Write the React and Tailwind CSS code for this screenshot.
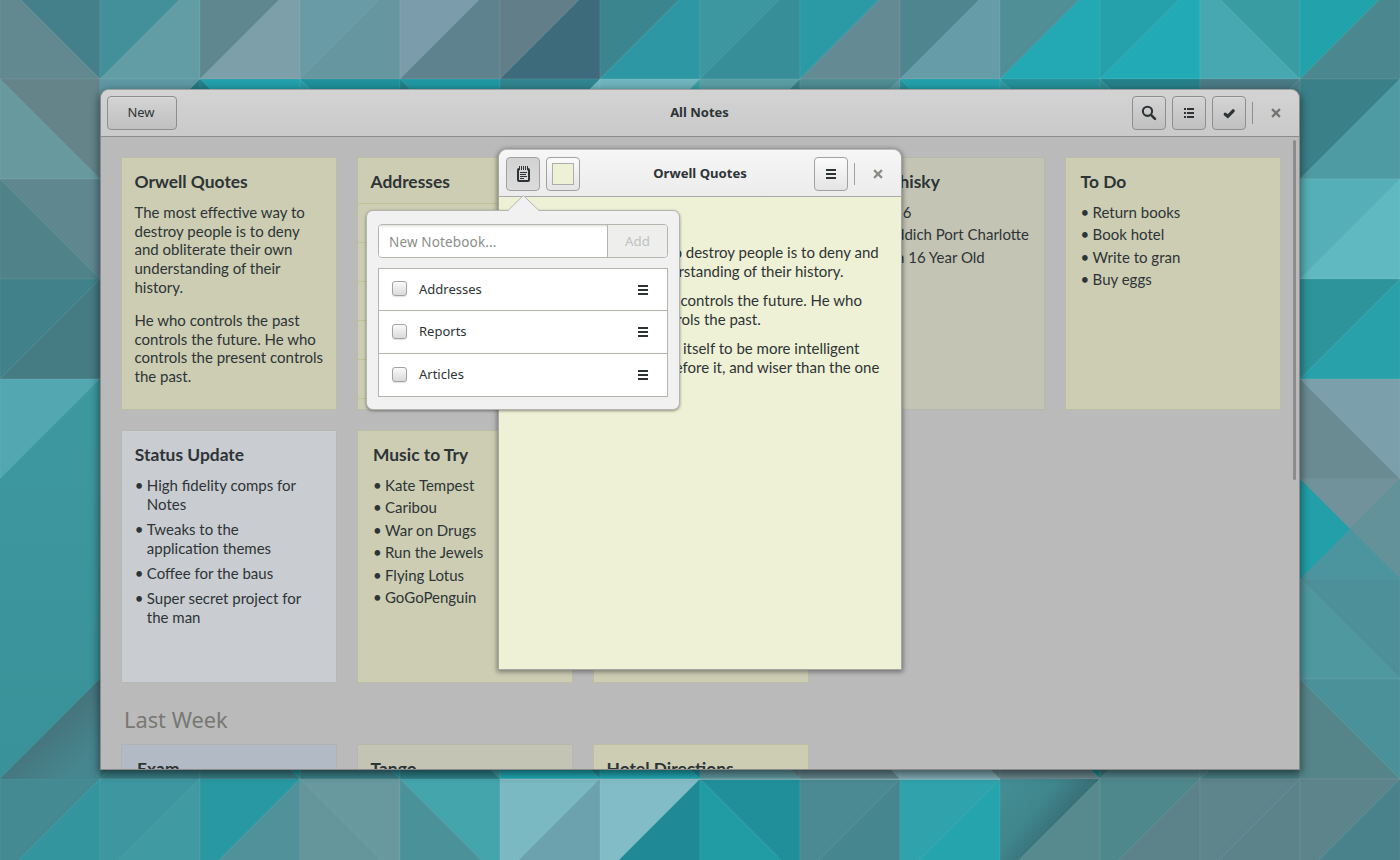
import React from "react";

/* ---------- wallpaper ---------- */

// [column x, row y, diagonal direction, upper colour, lower colour]
const TILES = [
  [0, -21, "\\", "#43808a", "#628890"],
  [100, -21, "/", "#43909a", "#629da5"],
  [200, -21, "/", "#5f878f", "#7c9fa9"],
  [300, -21, "/", "#689ba6", "#6696a0"],
  [400, -21, "/", "#7b9caa", "#5f838e"],
  [500, -21, "/", "#627e88", "#3d6b7b"],
  [600, -21, "/", "#3b858f", "#2d97a3"],
  [700, -21, "/", "#3c97a0", "#378e98"],
  [800, -21, "/", "#2c9aa4", "#648b94"],
  [900, -21, "/", "#4f858f", "#669ba8"],
  [1000, -21, "/", "#518f96", "#22a9b4"],
  [1100, -21, "/", "#25a1ab", "#22abb6"],
  [1200, -21, "\\", "#3a9ca3", "#48a8b2"],
  [1300, -21, "/", "#22a2ab", "#4a878f"],

  [0, 79, "\\", "#648489", "#67999f"],
  [100, 79, "/", "#5d98a4", "#247a84"],
  [200, 79, "\\", "#22a0ac", "#20808a"],
  [300, 79, "\\", "#1f919c", "#2a9ba6"],
  [400, 79, "\\", "#2098a3", "#247f8a"],
  [500, 79, "/", "#318590", "#6fb8c1"],
  [600, 79, "/", "#6fb5be", "#38a0a5"],
  [700, 79, "/", "#5a9ea4", "#3a8088"],
  [800, 79, "/", "#4f8c92", "#58969c"],
  [900, 79, "\\", "#22a0aa", "#239099"],
  [1000, 79, "\\", "#25909a", "#2f9aa3"],
  [1100, 79, "\\", "#26808a", "#2f8a93"],
  [1200, 79, "/", "#4a7a85", "#4a7f89"],
  [1300, 79, "/", "#3a8089", "#4f9ba3"],

  [0, 179, "\\", "#5f8790", "#4f8289"],
  [0, 279, "/", "#41828a", "#457b83"],
  [0, 379, "/", "#52a7b1", "#3d979f"],
  [0, 679, "/", "#3b949c", "#467d85"],

  [1300, 179, "/", "#55afb8", "#60b9c1"],
  [1300, 279, "/", "#2d949b", "#28a1ab"],
  [1300, 379, "\\", "#7ba0ab", "#6b8b93"],
  [1300, 579, "\\", "#4d9099", "#4f989f"],
  [1300, 679, "\\", "#4b9199", "#558589"],

  [100, 679, "/", "#357a82", "#397f87"],
  [200, 679, "\\", "#219099", "#377c84"],
  [300, 679, "\\", "#219099", "#3a7f87"],
  [400, 679, "\\", "#3a9aa2", "#2d8088"],
  [500, 679, "\\", "#20929c", "#20a8b3"],
  [600, 679, "\\", "#20929c", "#20a8b3"],
  [700, 679, "\\", "#64858c", "#5f979d"],
  [800, 679, "\\", "#7fa8b0", "#64858c"],
  [900, 679, "\\", "#68858b", "#7fa8b0"],
  [1000, 679, "\\", "#20858d", "#68858b"],
  [1100, 679, "/", "#467b81", "#54868c"],
  [1200, 679, "/", "#54848a", "#4a8085"],

  [0, 779, "/", "#438a92", "#33959d"],
  [100, 779, "/", "#3d96a0", "#409aa2"],
  [200, 779, "/", "#2898a2", "#50919a"],
  [300, 779, "\\", "#67999f", "#64969c"],
  [400, 779, "\\", "#44a5ad", "#4b9199"],
  [500, 779, "/", "#7ab8c2", "#6ba2ad"],
  [600, 779, "/", "#82bdc7", "#1f8a95"],
  [700, 779, "\\", "#218f99", "#219ca5"],
  [800, 779, "/", "#4b8a92", "#46868e"],
  [900, 779, "/", "#30a2ab", "#26a4ae"],
  [1000, 779, "/", "url(#fold)", "#578a8f"],
  [1100, 779, "/", "#4e888c", "#5d838a"],
  [1200, 779, "/", "#5d858b", "#5b8389"],
  [1300, 779, "/", "#5d848a", "#49828a"],
];

function Wallpaper() {
  return (
    <svg className="absolute inset-0" width="1400" height="860" viewBox="0 0 1400 860" aria-hidden="true">
      <defs>
        <linearGradient id="fold" gradientUnits="userSpaceOnUse" x1="1005" y1="790" x2="1052" y2="828">
          <stop offset="0" stopColor="#438c93" />
          <stop offset="0.6" stopColor="#3f858c" />
          <stop offset="1" stopColor="#3a727a" />
        </linearGradient>
        <linearGradient id="sheet" x1="0" y1="0" x2="0" y2="1">
          <stop offset="0" stopColor="#3d989f" />
          <stop offset="1" stopColor="#3a9199" />
        </linearGradient>
        <linearGradient id="crease" gradientUnits="userSpaceOnUse" x1="48" y1="727" x2="80" y2="765">
          <stop offset="0" stopColor="#46747d" />
          <stop offset="1" stopColor="#46868e" />
        </linearGradient>
      </defs>
      <rect width="1400" height="860" fill="#3c969d" />
      {TILES.map(([x, y, d, up, low], i) => {
        const a = d === "/" ? `${x},${y} ${x + 100},${y} ${x},${y + 100}` : `${x},${y} ${x + 100},${y} ${x + 100},${y + 100}`;
        const b = d === "/" ? `${x + 100},${y} ${x + 100},${y + 100} ${x},${y + 100}` : `${x},${y} ${x + 100},${y + 100} ${x},${y + 100}`;
        return (
          <g key={i} stroke="#ffffff" strokeOpacity="0.09" strokeWidth="0.7">
            <polygon points={a} fill={up} />
            <polygon points={b} fill={low} />
          </g>
        );
      })}
      <polygon points="0,479 100,379 100,679 0,779" fill="url(#sheet)" />
      <polygon points="100,679 100,779 0,779" fill="url(#crease)" />
      <g>
        <polygon points="1300,479 1400,479 1350,529" fill="#71929a" />
        <polygon points="1400,479 1400,579 1350,529" fill="#63929a" />
        <polygon points="1300,579 1400,579 1350,529" fill="#4d959e" />
        <polygon points="1300,479 1350,529 1300,579" fill="#229fa8" />
      </g>
      <path d="M500 779.3H1000" stroke="#9fc3c8" strokeOpacity="0.8" />
    </svg>
  );
}

/* ---------- icons ---------- */

const ink = "#2e3436";

const SearchIcon = () => (
  <svg width="16" height="16" viewBox="0 0 16 16" fill="none" stroke={ink}>
    <circle cx="6.5" cy="6.3" r="4.6" strokeWidth="2.1" />
    <path d="M10 9.8 14 13.8" strokeWidth="2.6" strokeLinecap="round" />
  </svg>
);

const ListIcon = () => (
  <svg width="16" height="16" viewBox="0 0 16 16" fill={ink}>
    <path d="M3 3h2v2H3zM6 3h7v2H6zM3 7h2v2H3zM6 7h7v2H6zM3 11h2v2H3zM6 11h7v2H6z" />
  </svg>
);

const CheckIcon = () => (
  <svg width="16" height="16" viewBox="0 0 16 16" fill="none" stroke={ink} strokeWidth="3.2" strokeLinecap="round">
    <path d="M4.200 9.200 6.800 11.300 12.200 5.800" />
  </svg>
);

const MenuIcon = () => (
  <svg width="16" height="16" viewBox="0 0 16 16" fill={ink}>
    <path d="M3 3h10v2H3zM3 7h10v2H3zM3 11h10v2H3z" />
  </svg>
);

const CloseIcon = ({ color }) => (
  <svg width="16" height="16" viewBox="0 0 16 16" fill="none" stroke={color} strokeWidth="2.2">
    <path d="M4.1 4.1 11.9 11.9M11.9 4.1 4.1 11.9" />
  </svg>
);

const NotepadIcon = () => (
  <svg width="17" height="16" viewBox="0 0 17 16" fill="none">
    <path d="M4.500 2H3.900A1.900 1.900 0 0 0 2 3.900v10.200A1.900 1.900 0 0 0 3.900 16h9.200a1.900 1.900 0 0 0 1.900-1.900V3.900A1.900 1.900 0 0 0 13.100 2h-.6v2.500h.5V14H4V4.500h.5z" fill={ink} />
    <path d="M4.500 0v4M6.500 0v4M8.500 0v4M10.500 0v4M12.500 0v4" stroke={ink} strokeWidth="1" />
    <path d="M5 6.500h7M5 8.500h6M5 10.500h7M5 12.500h4" stroke={ink} strokeWidth="1" />
  </svg>
);

/* ---------- notes ---------- */

const TONES = {
  straw: "bg-[#cccdb3] border-[#bcbda5]",
  sand: "bg-[#c3c4b4] border-[#b7b8a9]",
  mist: "bg-[#c9ccd1] border-[#b6b8b4]",
  slate: "bg-[#b2bac5] border-[#b0b3b1]",
};

function Note({ tone, title, inset = "pl-[12.5px]", children }) {
  return (
    <article className={`h-[253px] w-[216px] shrink-0 border pt-3 whitespace-nowrap ${TONES[tone]} ${inset}`}>
      <h2 className="h-6 text-[17.4px] leading-6 font-bold">{title}</h2>
      <div className="mt-[8.900px] text-[15px] leading-[18.750px]">{children}</div>
    </article>
  );
}

function Bullets({ items, gap }) {
  return (
    <ul className={`flex flex-col ${gap}`}>
      {items.map((lines) => (
        <li key={lines[0]} className="flex">
          <span className="w-3 shrink-0">•</span>
          <span>{lines.map((l) => <span key={l} className="block">{l}</span>)}</span>
        </li>
      ))}
    </ul>
  );
}

const Para = ({ lines }) => <p>{lines.map((l) => <span key={l} className="block">{l}</span>)}</p>;

/* ---------- windows ---------- */

const DIM_BUTTON = "flex h-[34px] items-center justify-center rounded-[4px] border border-[#8e8e8e] bg-linear-to-b from-[#d4d4d4] to-[#c0c0c0] shadow-[inset_0_1px_#dadada]";
const BUTTON = "flex size-[34px] items-center justify-center rounded-[4px] border border-[#a1a1a1]";

function NotesWindow() {
  return (
    <section className="absolute top-[89px] left-[100px] flex h-[681px] w-[1200px] flex-col overflow-hidden rounded-t-[9px] border border-[#8b8b8b] border-t-[#a0a0a0] bg-[#bababa] shadow-[0_3px_9px_1px_rgba(0,0,0,0.5)]">
      <header className="flex h-[47px] shrink-0 items-center border-b border-[#8b8b8b] bg-linear-to-b from-[#d3d3d3] to-[#cacaca] px-1.5 font-['Noto_Sans',sans-serif] text-[13px]">
        <div className="flex-1">
          <button className={`w-[70px] pr-0.5 ${DIM_BUTTON}`}>New</button>
        </div>
        <h1 className="pr-px text-[13px] font-bold">All Notes</h1>
        <div className="flex flex-1 items-center justify-end">
          <div className="flex gap-1.5">
            <button className={`w-[34px] ${DIM_BUTTON}`}><SearchIcon /></button>
            <button className={`w-[34px] ${DIM_BUTTON}`}><ListIcon /></button>
            <button className={`w-[34px] ${DIM_BUTTON}`}><CheckIcon /></button>
          </div>
          <span className="ml-1.5 h-[22px] w-px bg-[#8e8e8e]" />
          <button className="mr-[9px] ml-[15px]"><CloseIcon color="#747570" /></button>
        </div>
      </header>

      <div className="flex min-h-0 flex-1 justify-between overflow-hidden">
        <main className="pt-5 pl-5">
          <div className="grid grid-cols-5 gap-5">
            <Note tone="straw" title="Orwell Quotes">
              <div className="flex flex-col gap-[14.250px]">
                <Para lines={["The most effective way to", "destroy people is to deny", "and obliterate their own", "understanding of their", "history."]} />
                <Para lines={["He who controls the past", "controls the future. He who", "controls the present controls", "the past."]} />
              </div>
            </Note>
            <Note tone="straw" title="Addresses">
              <div className="mt-[9px] -ml-[12.500px] flex flex-col gap-[38px]">
                {[0, 1, 2, 3, 4, 5].map((n) => <hr key={n} className="h-px border-0 bg-[#bfc494]" />)}
              </div>
            </Note>
            <Note tone="straw" title="" />
            <Note tone="sand" title="Top Whisky" inset="pl-[19px]">
              <div className="-ml-[18.500px]">
                <Bullets gap="gap-[3.750px]" items={[["Ardbeg 16"], ["Bruichladdich Port Charlotte"], ["Lagavulin 16 Year Old"]]} />
              </div>
            </Note>
            <Note tone="straw" title="To Do" inset="pl-[14.600px]">
              <Bullets gap="gap-[3.750px]" items={[["Return books"], ["Book hotel"], ["Write to gran"], ["Buy eggs"]]} />
            </Note>
            <Note tone="mist" title="Status Update" inset="pl-[12.800px]">
              <Bullets gap="gap-[6.500px]" items={[["High fidelity comps for", "Notes"], ["Tweaks to the", "application themes"], ["Coffee for the baus"], ["Super secret project for", "the man"]]} />
            </Note>
            <Note tone="straw" title="Music to Try" inset="pl-[15px]">
              <Bullets gap="gap-[3.750px]" items={[["Kate Tempest"], ["Caribou"], ["War on Drugs"], ["Run the Jewels"], ["Flying Lotus"], ["GoGoPenguin"]]} />
            </Note>
            <Note tone="straw" title="" />
          </div>
          <h2 className="flex h-[61px] items-center pt-[13px] pl-[3px] font-['Noto_Sans',sans-serif] text-[21.800px] leading-none text-[#777874]">Last Week</h2>
          <div className="flex gap-5">
            <Note tone="slate" title="Exam" inset="pl-[15px]" />
            <Note tone="sand" title="Tango" />
            <Note tone="straw" title="Hotel Directions" />
          </div>
        </main>
        <div className="mt-[3px] mr-[3px] h-[340px] w-[3px] rounded-full bg-[#8b8c8e]" />
      </div>
    </section>
  );
}

function NotebookPopover() {
  return (
    <div className="absolute top-[210px] left-[366px] h-[200px] w-[314px] rounded-[7px] border border-[#b5b5b0] bg-[#f1f1f1] px-[11px] pt-[13px] font-['Noto_Sans',sans-serif] text-[13px] shadow-[0_1px_3px_rgba(0,0,0,0.4)]">
      <svg className="absolute -top-4 left-[141px]" width="32" height="17" viewBox="0 0 32 17" aria-hidden="true">
        <path d="M0 15.500 15.300 0.500 31 15.500V17H0z" fill="#f1f1f1" />
        <path d="M0 15.500 15.300 0.500 31 15.500" fill="none" stroke="#b5b5b0" />
      </svg>
      <div className="flex h-[34px] overflow-hidden rounded-[4px] border border-[#b5b5ae]">
        <div className="flex w-[229px] items-center border-r border-[#b5b5ae] bg-white pt-0.5 pl-2.5 text-[13.500px] tracking-[0.150px] text-[#8b8e8a] shadow-[inset_0_3px_3px_-2px_rgba(0,0,0,0.16)]">New Notebook...</div>
        <button className="flex-1 bg-[#eeeeed] pt-0.5 text-[13.300px] text-[#c0c1bf]">Add</button>
      </div>
      <ul className="mt-2.5 grid h-[129px] grid-rows-[42px_43px_42px] divide-y divide-[#b5b5ae] border border-[#b5b5ae] bg-white">
        {["Addresses", "Reports", "Articles"].map((name) => (
          <li key={name} className="flex items-center pl-[13px]">
            <span className="-mt-0.5 size-[15px] rounded-[3px] border border-[#a3a3a3] bg-linear-to-b from-[#fafafa] to-[#dadada] shadow-[0_1px_1px_rgba(0,0,0,0.12)]" />
            <span className="ml-3 flex-1">{name}</span>
            <span className="mr-4"><MenuIcon /></span>
          </li>
        ))}
      </ul>
    </div>
  );
}

function NoteWindow() {
  return (
    <section className="absolute top-[149px] left-[498px] flex h-[521px] w-[404px] flex-col overflow-hidden rounded-t-[9px] border border-[#a6a6a2] border-t-[#bfbfbf] bg-[#eef1d5] shadow-[0_1px_5px_1px_rgba(0,0,0,0.4)]">
      <header className="flex h-[47px] shrink-0 items-center border-b border-[#a9a9a9] bg-linear-to-b from-[#f6f6f6] to-[#ececec] px-[7px] pt-0.5 font-['Noto_Sans',sans-serif]">
        <div className="flex flex-1 gap-1.5">
          <button className={`${BUTTON} bg-linear-to-b from-[#d2d2d2] to-[#dcdcdc]`}><NotepadIcon /></button>
          <button className={`${BUTTON} bg-linear-to-b from-[#fbfbfb] to-[#e4e4e4]`}>
            <span className="size-[22px] border border-[#adaea9] bg-[#eef1d5]" />
          </button>
        </div>
        <h1 className="text-[13.100px] font-bold">Orwell Quotes</h1>
        <div className="flex flex-1 items-center justify-end">
          <button className={`${BUTTON} bg-linear-to-b from-[#fbfbfb] to-[#e4e4e4]`}><MenuIcon /></button>
          <span className="ml-1.5 h-[22px] w-px bg-[#a1a1a1]" />
          <button className="mr-2 ml-[15px]"><CloseIcon color="#8b8c87" /></button>
        </div>
      </header>
      <div className="flex flex-col gap-[10.500px] pt-[45.800px] pl-[12.600px] text-[15px] leading-[18.750px] whitespace-nowrap">
        <Para lines={["The most effective way to destroy people is to deny and", "obliterate their own understanding of their history."]} />
        <Para lines={["He who controls the past controls the future. He who", "controls the present controls the past."]} />
        <Para lines={["Each generation imagines itself to be more intelligent", "than the one that went before it, and wiser than the one", "that comes after it."]} />
      </div>
    </section>
  );
}

export default function App() {
  return (
    <div className="relative h-[860px] w-[1400px] overflow-hidden font-[Lato,sans-serif] text-[#2e3436]">
      <Wallpaper />
      <NotesWindow />
      <NoteWindow />
      <NotebookPopover />
    </div>
  );
}
